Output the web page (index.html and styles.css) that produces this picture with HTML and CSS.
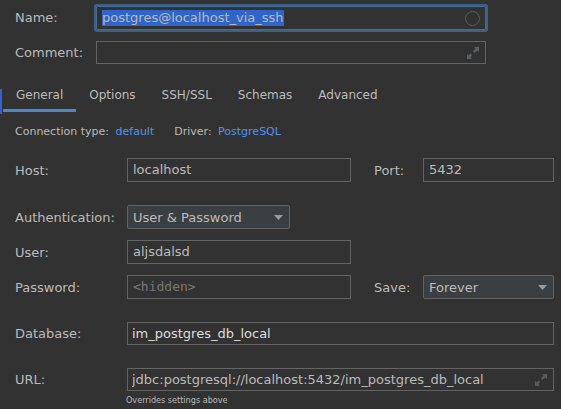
FILE: index.html
```html
<!DOCTYPE html>
<html lang="en">
<head>
<meta charset="utf-8">
<title>Data Source</title>
<link rel="stylesheet" href="styles.css">
</head>
<body>
<form class="dialog">
  <div class="identity">
    <label for="name">Name:</label>
    <div class="field field-focused">
      <input id="name" type="text" value="postgres@localhost_via_ssh" spellcheck="false" autofocus>
      <svg class="field-icon" width="16" height="16" viewBox="0 0 16 16"><circle cx="7.500" cy="8.500" r="7" fill="none" stroke="#5b5d5e"/></svg>
    </div>
    <label for="comment">Comment:</label>
    <div class="field field-short">
      <input id="comment" type="text">
      <svg class="field-icon" width="16" height="16" viewBox="0 0 16 16" fill="#5d6163"><path d="M9 2h5v5l-1.500-1.500L9.500 8 8 6.500l2.500-3zM2 14V9l1.500 1.500L5.500 8.500 7 10l-1.500 2.500L7 14z"/></svg>
    </div>
  </div>

  <nav class="tabs">
    <a class="tab tab-active" href="#general">General</a>
    <a class="tab" href="#options">Options</a>
    <a class="tab" href="#ssh">SSH/SSL</a>
    <a class="tab" href="#schemas">Schemas</a>
    <a class="tab" href="#advanced">Advanced</a>
  </nav>

  <div class="driver">
    <span>Connection type: <a href="#type">default</a></span>
    <span>Driver: <a href="#driver">PostgreSQL</a></span>
  </div>

  <div class="settings">
    <div class="row">
      <label for="host">Host:</label>
      <div class="field"><input id="host" type="text" value="localhost"></div>
      <label class="side-label" for="port">Port:</label>
      <div class="field"><input id="port" type="text" value="5432"></div>
    </div>
    <div class="row row-group">
      <label for="auth">Authentication:</label>
      <div class="combo combo-auth">
        <select id="auth"><option>User &amp; Password</option></select>
        <svg class="arrow" width="9" height="5" viewBox="0 0 9 5"><path d="M0 0h9L4.500 5z" fill="#9a9da0"/></svg>
      </div>
    </div>
    <div class="row">
      <label for="user">User:</label>
      <div class="field"><input id="user" type="text" value="aljsdalsd"></div>
    </div>
    <div class="row">
      <label for="password">Password:</label>
      <div class="field"><input id="password" class="hidden-value" type="password" placeholder="&lt;hidden&gt;"></div>
      <label class="side-label" for="save">Save:</label>
      <div class="combo">
        <select id="save"><option>Forever</option></select>
        <svg class="arrow" width="9" height="5" viewBox="0 0 9 5"><path d="M0 0h9L4.500 5z" fill="#9a9da0"/></svg>
      </div>
    </div>
    <div class="row row-group row-editor">
      <label for="database">Database:</label>
      <div class="field field-short field-wide"><input id="database" class="bright" type="text" value="im_postgres_db_local" spellcheck="false"></div>
    </div>
    <div class="row row-group row-editor">
      <label for="url">URL:</label>
      <div class="field field-short field-wide">
        <input id="url" type="text" value="jdbc:postgresql://localhost:5432/im_postgres_db_local" spellcheck="false">
        <svg class="field-icon" width="16" height="16" viewBox="0 0 16 16" fill="#565c60"><path d="M9 2h5v5l-1.500-1.500L9.500 8 8 6.500l2.500-3zM2 14V9l1.500 1.500L5.500 8.500 7 10l-1.500 2.500L7 14z"/></svg>
      </div>
    </div>
    <p class="hint">Overrides settings above</p>
  </div>
</form>
<script src="script.js"></script>
</body>
</html>
```
FILE: styles.css
```css
* {
  box-sizing: border-box;
}

body {
  margin: 0;
  background: #323232;
  color: #bbbbbb;
  font: 13px/16px "DejaVu Sans", sans-serif;
}

a {
  color: #5394ec;
  text-decoration: none;
}

.identity {
  display: grid;
  grid-template-columns: 81px 1fr;
  row-gap: 11px;
  align-items: center;
  padding: 6px 75px 0 15px;
}

.field {
  display: flex;
  align-items: center;
  height: 24px;
  padding: 0 4px 0 5px;
  border: 1px solid #646464;
}

.field-short {
  height: 23px;
}

.field-focused {
  border-color: #466d94;
  border-radius: 1px;
  box-shadow: 0 0 0 2px #3d6185;
}

input {
  flex: 1;
  min-width: 0;
  padding: 0;
  border: 0;
  outline: 0;
  background: transparent;
  color: inherit;
  font: inherit;
}

input::selection {
  background: #2f65ca;
  color: #bbbbbb;
}

.field-icon {
  flex: none;
}

.tabs {
  position: relative;
  display: flex;
  margin-top: 16px;
  padding-left: 3px;
  font-size: 12px;
}

.tabs::before {
  content: "";
  position: absolute;
  left: 0;
  top: 9px;
  width: 2px;
  height: 25px;
  background: #2f65ca;
}

.tab {
  padding: 7px 13px 6px;
  border-bottom: 3px solid transparent;
  color: inherit;
}

.tab-active {
  border-color: #4a88c7;
}

.driver {
  display: flex;
  gap: 20px;
  margin-top: 12px;
  padding-left: 15px;
  font-size: 11px;
}

.driver a {
  margin-left: 3px;
}

.settings {
  padding: 18px 7px 0 15px;
}

.row {
  display: grid;
  grid-template-columns: 112px 1fr 72px 131px;
  align-items: center;
  margin-bottom: 11px;
}

.row label {
  padding-top: 2px;
}

.row-group {
  margin-top: 23px;
}

.row .side-label {
  padding-left: 23px;
}

.row-editor label {
  padding-top: 0;
}

.row-editor .field {
  padding-left: 4px;
}

.field-wide {
  grid-column: 2 / -1;
}

.bright {
  color: #dddddd;
}

.hidden-value {
  font-family: "DejaVu Sans Mono", monospace;
}

.hidden-value::placeholder {
  color: #777777;
  opacity: 1;
}

.combo {
  display: grid;
  align-items: center;
}

.combo-auth {
  width: 163px;
}

.combo > * {
  grid-area: 1 / 1;
}

select {
  appearance: none;
  width: 100%;
  height: 24px;
  padding: 2px 5px 0;
  border: 1px solid #646464;
  border-radius: 2px;
  background: #3c3f41;
  color: inherit;
  font: inherit;
}

.arrow {
  justify-self: end;
  margin-right: 7px;
  pointer-events: none;
}

.hint {
  margin: -10px 0 0 111px;
  font-family: "DejaVu Sans Condensed", "DejaVu Sans", sans-serif;
  font-size: 9px;
}
```
FILE: script.js
```js
document.getElementById("name").focus();
document.getElementById("name").select();
```
